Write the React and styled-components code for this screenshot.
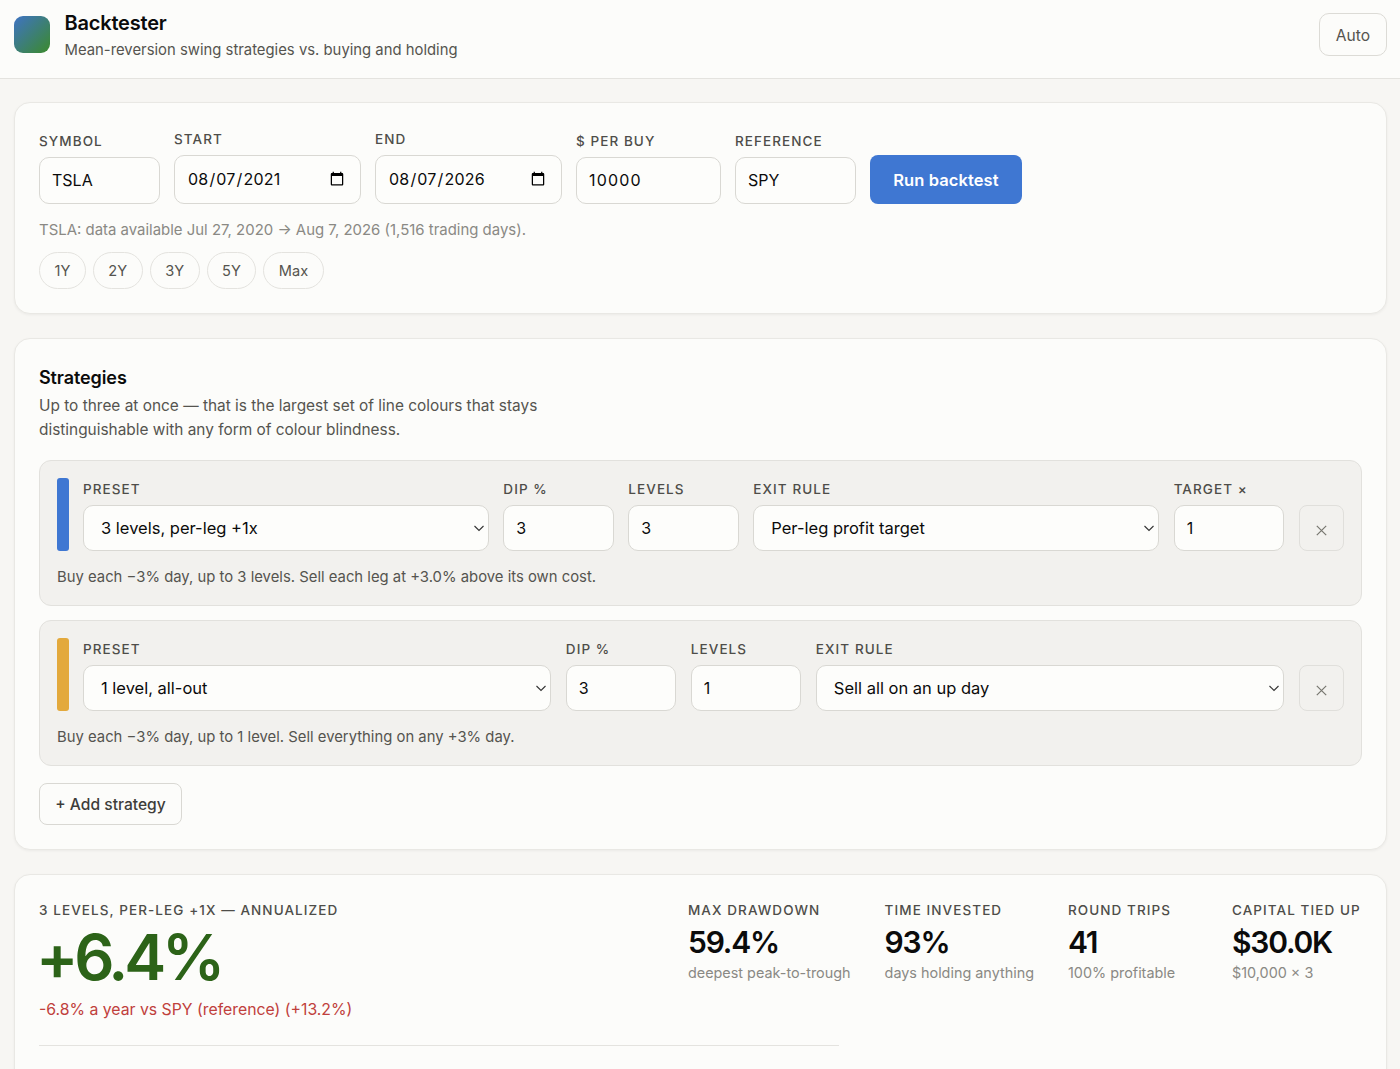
import React from "react";
import styled, { createGlobalStyle } from "styled-components";

const Global = createGlobalStyle`
  * { box-sizing: border-box; }
  html, body { margin: 0; padding: 0; background: #f7f6f3; }
  body { font-family: Inter, "Liberation Sans", sans-serif; color: #0b0b0b; height: 1069px; overflow: hidden; }
`;

const Header = styled.header`
  height: 79px; display: flex; align-items: flex-start; justify-content: space-between;
  padding: 11px 13px 0 14px; background: #fcfcfa; border-bottom: 1px solid #e4e3df;
`;
const Brand = styled.div`display: flex; gap: 14.5px; align-items: flex-start;`;
const Logo = styled.div`
  width: 36px; height: 37px; margin-top: 5px; border-radius: 9px;
  background: linear-gradient(135deg, #3f73c4 0%, #3b8a2c 100%);
`;
const Title = styled.div`font-size: 20px; font-weight: 600; line-height: 24px; letter-spacing: -0.2px;`;
const Subtitle = styled.div`font-size: 14.85px; line-height: 20px; margin-top: 5px; color: #55544f;`;
const ThemeBtn = styled.button`
  height: 43px; width: 68px; margin-top: 2px; padding: 1px 0 0; border: 1px solid #dcdbd6; border-radius: 10px; background: #fcfcfa;
  font: 400 15.6px Inter, sans-serif; color: #55544f;
`;

const Main = styled.main`padding: 23px 13px 0 14px; display: flex; flex-direction: column; gap: 24px;`;
const Card = styled.section`
  background: #fcfcfa; border: 1px solid #e9e8e4; border-radius: 16px; padding: ${p => p.$top || 28}px 24px 24px;
  box-shadow: 0 1px 3px rgba(0,0,0,.05);
`;
const FormRow = styled.div`display: flex; gap: 14.4px; align-items: flex-end;`;
const Field = styled.label`display: flex; flex-direction: column; gap: 8px; width: ${p => p.$w ? p.$w + "px" : "auto"}; flex: ${p => p.$grow ? "1 1 0" : "none"}; min-width: 0;`;
const Label = styled.span`font-size: 13.5px; font-weight: 500; line-height: 16px; letter-spacing: 1.08px; color: #4e4d49; text-transform: uppercase;`;
const Input = styled.input`
  width: 100%; height: ${p => p.$h || 47}px; border: 1px solid #d9d8d3; border-radius: 10px; background: #fdfdfb;
  padding: 0 12px ${p => p.$lift || 0}px; font: 400 16px Inter, sans-serif; color: #0b0b0b; outline: none;
  letter-spacing: ${p => p.$track || 0}px;
  &::-webkit-calendar-picker-indicator { margin-right: 1px; }
`;
const SelectWrap = styled.div`position: relative; height: 46px;`;
const Select = styled.select`
  width: 100%; height: 46px; appearance: none; border: 1px solid #d9d8d3; border-radius: 10px; background: #fdfdfb;
  padding: 0 17px; font: 400 16.5px Inter, sans-serif; color: #0b0b0b;
`;
const Chevron = styled.svg`position: absolute; right: 4px; top: 18px; width: 12px; height: 10px; pointer-events: none;`;
const RunBtn = styled.button`
  height: 49px; width: 152px; border: none; border-radius: 8px; background: #3f77d2; color: #fff;
  font: 600 16.5px Inter, sans-serif; letter-spacing: .1px;
`;
const Hint = styled.div`font-size: 14.95px; line-height: 20px; color: #8a8984; margin-top: 16px;`;
const Pills = styled.div`display: flex; gap: 7px; margin-top: 12px;`;
const Pill = styled.button`
  height: 37px; padding: 0 14.5px; border-radius: 19px; border: 1px solid #e4e3df; background: #fcfcfa;
  font: 400 14.6px Inter, sans-serif; color: #55544f;
`;

const H2 = styled.h2`font-size: 18px; font-weight: 600; line-height: 22px; margin: 0; letter-spacing: -0.1px;`;
const Intro = styled.p`font-size: 15.42px; line-height: 24px; margin: 5px 0 0; color: #55544f; max-width: 520px;`;
const Strategies = styled.div`display: flex; flex-direction: column; gap: 14.5px; margin-top: 18px;`;
const Strategy = styled.div`
  height: 145.5px; background: #f2f1ee; border: 1px solid #e2e1dd; border-radius: 12px; padding: 17px 17px 0;
`;
const StrategyRow = styled.div`display: flex; gap: 14.4px; align-items: flex-end;`;
const Swatch = styled.div`width: 12px; height: 73px; border-radius: 3px; background: ${p => p.$c}; margin-right: -0.4px; flex: none;`;
const RemoveBtn = styled.button`
  width: 45.4px; height: 46px; flex: none; display: flex; align-items: center; justify-content: center; padding: 4px 0 0;
  border: 1px solid #e0dfdb; border-radius: 8px; background: #f2f1ee; color: #77766f;
`;
const Explain = styled.div`font-size: 14.85px; line-height: 20px; color: #55544f; margin-top: 16px;`;
const AddBtn = styled.button`
  height: 42px; width: 143px; margin-top: 17.5px; border: 1px solid #d9d8d3; border-radius: 8px; background: #fcfcfa;
  font: 500 15.6px Inter, sans-serif; color: #3e3d3a;
`;

const ResultTop = styled.div`display: flex; justify-content: space-between; align-items: flex-start;`;
const HeroLabel = styled(Label)`display: block;`;
const Hero = styled.div`font-size: 63px; font-weight: 600; line-height: 72px; letter-spacing: -4.2px; color: #2c6318; margin: 3px 0 0 -3px;`;
const Versus = styled.div`font-size: 15.8px; line-height: 22px; color: #c0403c; margin-top: 6px;`;
const Stats = styled.div`display: flex; gap: 34px;`;
const Stat = styled.div`display: flex; flex-direction: column; min-width: 130px;`;
const StatValue = styled.div`font-size: 30px; font-weight: 600; line-height: 36px; margin-top: 6px; letter-spacing: -1.2px;`;
const StatNote = styled.div`font-size: 14.4px; line-height: 20px; color: #8a8984; margin-top: 3px;`;
const Divider = styled.hr`width: 800px; border: none; border-top: 1px solid #e4e3df; margin: 24px 0 60px;`;

const Arrow = () => (
  <Chevron viewBox="0 0 12 10" fill="none"><path d="M1.5 3l4.5 4.5L10.5 3" stroke="#333" strokeWidth="1.1" /></Chevron>
);
const Cross = () => (
  <svg width="11" height="11" viewBox="0 0 11 11" fill="none"><path d="M.8.8l9.4 9.4M10.2.8L.8 10.2" stroke="currentColor" strokeWidth="1.2" /></svg>
);
const Drop = ({ value }) => (
  <SelectWrap>
    <Select defaultValue={value}><option>{value}</option></Select>
    <Arrow />
  </SelectWrap>
);

const Row = ({ color, preset, dip, levels, exit, target, note }) => (
  <Strategy>
    <StrategyRow>
      <Swatch $c={color} />
      <Field $grow><Label>Preset</Label><Drop value={preset} /></Field>
      <Field $w={110.6}><Label>Dip %</Label><Input $h={46} defaultValue={dip} /></Field>
      <Field $w={110.6}><Label>Levels</Label><Input $h={46} defaultValue={levels} /></Field>
      <Field $grow><Label>Exit rule</Label><Drop value={exit} /></Field>
      {target && <Field $w={110.6}><Label>Target ×</Label><Input $h={46} defaultValue={target} /></Field>}
      <RemoveBtn aria-label="Remove"><Cross /></RemoveBtn>
    </StrategyRow>
    <Explain>{note}</Explain>
  </Strategy>
);

const stats = [
  ["Max drawdown", "59.4%", "deepest peak-to-trough"],
  ["Time invested", "93%", "days holding anything"],
  ["Round trips", "41", "100% profitable"],
  ["Capital tied up", "$30.0K", "$10,000 × 3"],
];

export default function App() {
  return (
    <>
      <Global />
      <Header>
        <Brand>
          <Logo />
          <div>
            <Title>Backtester</Title>
            <Subtitle>Mean-reversion swing strategies vs. buying and holding</Subtitle>
          </div>
        </Brand>
        <ThemeBtn>Auto</ThemeBtn>
      </Header>
      <Main>
        <Card>
          <FormRow>
            <Field $w={120.6}><Label>Symbol</Label><Input $lift={2} defaultValue="TSLA" /></Field>
            <Field $w={186.6}><Label>Start</Label><Input $h={49} $lift={1} $track={0.2} type="date" defaultValue="2021-08-07" /></Field>
            <Field $w={186.6}><Label>End</Label><Input $h={49} $lift={1} $track={0.2} type="date" defaultValue="2026-08-07" /></Field>
            <Field $w={144.6}><Label>$ per buy</Label><Input $lift={2} $track={1.2} defaultValue="10000" /></Field>
            <Field $w={120.6}><Label>Reference</Label><Input $lift={2} defaultValue="SPY" /></Field>
            <RunBtn>Run backtest</RunBtn>
          </FormRow>
          <Hint>TSLA: data available Jul 27, 2020 → Aug 7, 2026 (1,516 trading days).</Hint>
          <Pills>
            {["1Y", "2Y", "3Y", "5Y", "Max"].map(p => <Pill key={p}>{p}</Pill>)}
          </Pills>
        </Card>
        <Card>
          <H2>Strategies</H2>
          <Intro>Up to three at once — that is the largest set of line colours that stays distinguishable with any form of colour blindness.</Intro>
          <Strategies>
            <Row color="#3f77d2" preset="3 levels, per-leg +1x" dip="3" levels="3" exit="Per-leg profit target" target="1"
              note="Buy each −3% day, up to 3 levels. Sell each leg at +3.0% above its own cost." />
            <Row color="#e3a93c" preset="1 level, all-out" dip="3" levels="1" exit="Sell all on an up day"
              note="Buy each −3% day, up to 1 level. Sell everything on any +3% day." />
          </Strategies>
          <AddBtn>+ Add strategy</AddBtn>
        </Card>
        <Card $top={27}>
          <ResultTop>
            <div>
              <HeroLabel>3 levels, per-leg +1x — annualized</HeroLabel>
              <Hero>+6.4%</Hero>
              <Versus>-6.8% a year vs SPY (reference) (+13.2%)</Versus>
            </div>
            <Stats>
              {stats.map(([l, v, n]) => (
                <Stat key={l}>
                  <Label>{l}</Label>
                  <StatValue>{v}</StatValue>
                  <StatNote>{n}</StatNote>
                </Stat>
              ))}
            </Stats>
          </ResultTop>
          <Divider />
        </Card>
      </Main>
    </>
  );
}
